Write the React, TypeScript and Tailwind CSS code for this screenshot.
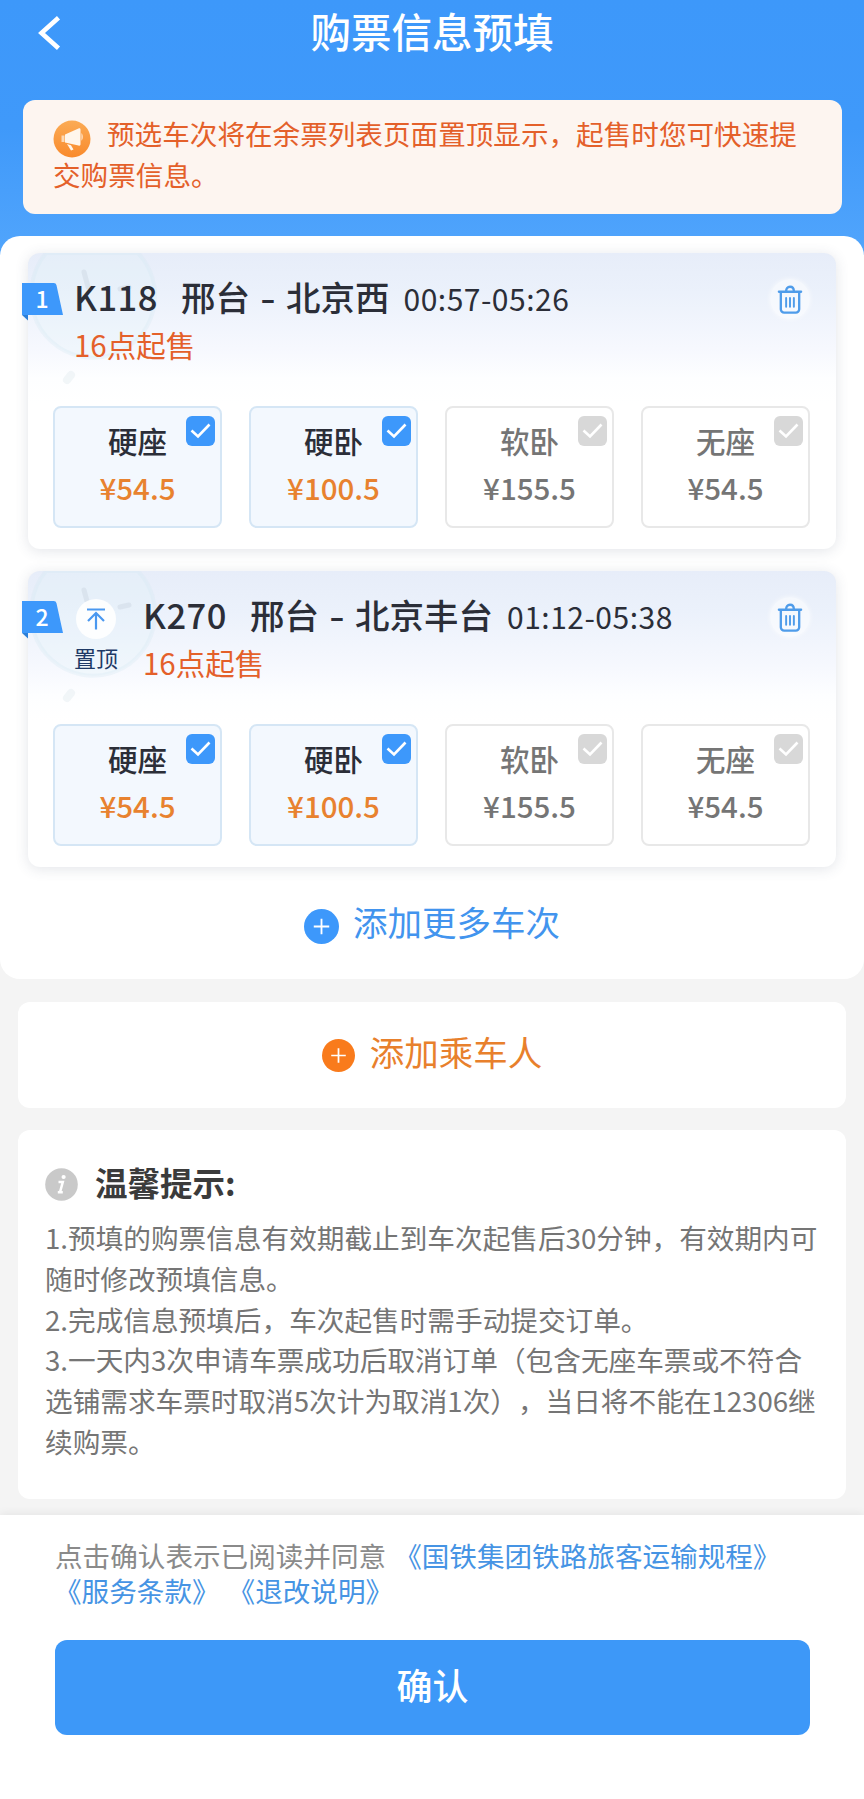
import React, { useState } from 'react';
import clsx from 'clsx';

interface Seat {
  name: string;
  price: string;
  checked: boolean;
}

interface Train {
  code: string;
  from: string;
  to: string;
  time: string;
  pinnable: boolean;
  seats: Seat[];
}

const SEATS: Seat[] = [
  { name: '硬座', price: '54.5', checked: true },
  { name: '硬卧', price: '100.5', checked: true },
  { name: '软卧', price: '155.5', checked: false },
  { name: '无座', price: '54.5', checked: false },
];

const TRAINS: Train[] = [
  { code: 'K118', from: '邢台', to: '北京西', time: '00:57-05:26', pinnable: false, seats: SEATS },
  { code: 'K270', from: '邢台', to: '北京丰台', time: '01:12-05:38', pinnable: true, seats: SEATS },
];

const TIPS = [
  '1.预填的购票信息有效期截止到车次起售后30分钟，有效期内可',
  '随时修改预填信息。',
  '2.完成信息预填后，车次起售时需手动提交订单。',
  '3.一天内3次申请车票成功后取消订单（包含无座车票或不符合',
  '选铺需求车票时取消5次计为取消1次），当日将不能在12306继',
  '续购票。',
];

function HornIcon() {
  return (
    <svg className="h-[38px] w-[38px] shrink-0" viewBox="0 0 38 38">
      <defs>
        <linearGradient id="horn" x1="0" y1="0" x2="0" y2="1">
          <stop offset="0" stopColor="#fbab55" />
          <stop offset="1" stopColor="#f98a2c" />
        </linearGradient>
      </defs>
      <circle cx="19" cy="19" r="18.5" fill="url(#horn)" />
      <path d="M8.500 15.500h3v6.500h-3z" fill="#fdd9b5" />
      <path d="M12 14.500L25.500 8.500c1.200-.5 2 0 2 1.200v14.600c0 1.200-.8 1.700-2 1.200L12 22.500z" fill="#fff6ec" />
      <path d="M14 24l4 1.200 2.500 4.300-2.500 1z" fill="#fff6ec" />
      <path d="M28.300 13c2.200 1.800 2.200 6 0 7.800z" fill="#fdd9b5" />
    </svg>
  );
}

function TrashIcon() {
  return (
    <svg className="h-[29px] w-[26px]" viewBox="0 0 26 30" fill="none" stroke="#4f9cea" strokeLinecap="round" strokeLinejoin="round">
      <path d="M1.500 7h23" strokeWidth="2.400" />
      <path d="M9 6.500c0-2.800 1.500-4.700 4-4.700s4 1.900 4 4.700" strokeWidth="2.400" />
      <path d="M3.500 8v17a3.500 3.500 0 0 0 3.500 3.500h12a3.500 3.500 0 0 0 3.500-3.500V8" strokeWidth="2.400" />
      <path d="M9 13.500v9M13 13.500v9M17 13.500v9" strokeWidth="2" />
    </svg>
  );
}

function PlusCircle({ className }: { className: string }) {
  return (
    <svg className={className} viewBox="0 0 34 34">
      <circle cx="17" cy="17" r="17" fill="currentColor" />
      <path d="M17 9.500v15M9.500 17h15" stroke="#fff" strokeWidth="1.800" />
    </svg>
  );
}

// faint clock behind the top left corner of a card
function ClockMark() {
  return (
    <svg className="absolute left-0 top-0 h-[140px] w-[140px]" viewBox="0 0 140 140" fill="none">
      <path
        d="M18 0h92a62 62 0 1 1-106 32A62 62 0 0 1 18 0z"
        fill="#e2f2f8"
        fillOpacity="0.3"
        stroke="#d3e9f3"
        strokeOpacity="0.3"
        strokeWidth="4"
      />
      <path d="M56 19l4 15M92 36l9-2" stroke="#c9d3de" strokeOpacity="0.4" strokeWidth="5" strokeLinecap="round" />
      <path d="M43 122l-4 5" stroke="#e6edf2" strokeOpacity="0.5" strokeWidth="8" strokeLinecap="round" />
    </svg>
  );
}

function SeatBox({ seat, onToggle }: { seat: Seat; onToggle: () => void }) {
  return (
    <button
      type="button"
      onClick={onToggle}
      className={clsx(
        'relative flex h-[122px] flex-col items-center rounded-lg border-2 pt-[12px] text-[29.500px] font-medium',
        seat.checked ? 'border-[#d5e6f5] bg-[#f3f8fe] text-[#2b2e38]' : 'border-[#e8e8e8] bg-white text-[#757575]',
      )}
    >
      <span className="leading-10">{seat.name}</span>
      <span className={clsx('mt-[7px] leading-10', seat.checked && 'text-[#e8822f]')}>¥{seat.price}</span>
      <span
        className={clsx(
          'absolute right-[5px] top-[8px] flex h-[30px] w-[29px] items-center justify-center rounded-md',
          seat.checked ? 'bg-[#3d98fb]' : 'bg-[#d8d8d8]',
        )}
      >
        <svg className="h-[16px] w-[21px]" viewBox="0 0 21 16" fill="none" stroke="#fff" strokeWidth="2.6">
          <path d="M1.500 7.500l6.500 6L19.500 1.500" />
        </svg>
      </span>
    </button>
  );
}

function TrainCard({ train, index }: { train: Train; index: number }) {
  const [seats, setSeats] = useState(train.seats);

  const toggle = (i: number) => {
    setSeats(seats.map((s, n) => (n === i ? { ...s, checked: !s.checked } : s)));
  };

  return (
    <div className="relative h-[296px] rounded-xl bg-white bg-[linear-gradient(180deg,#e7edf9_0px,#ebf1fb_40px,#f6f8fe_95px,#fdfeff_125px,#ffffff_150px)] pr-[26px] pl-[25px] shadow-[0_2px_14px_rgba(60,70,100,0.14)]">
      <ClockMark />
      <div className="absolute -left-[6px] top-[30px] h-[38px] w-[42px]">
        <svg className="absolute inset-0 h-full w-full" viewBox="0 0 42 38">
          <path d="M0 32h6v5.500z" fill="#2c7fd8" />
          <path d="M0 0h31.500a3 3 0 0 1 3 2.300L41 32H0z" fill="#3d98fb" />
        </svg>
        <span className="relative block w-[40px] text-center text-[23px] leading-[31px] font-medium text-white">{index}</span>
      </div>

      <div className="relative flex h-[153px] pl-[21px] pt-[22px]">
        {train.pinnable && (
          <div className="mr-[25px] flex w-[44px] flex-col items-center pt-[6px]">
            <div className="flex h-[40px] w-[40px] items-center justify-center rounded-full bg-white/90">
              <svg className="h-[22px] w-[20px]" viewBox="0 0 20 22" fill="none" stroke="#4a98f0" strokeWidth="2.200">
                <path d="M1 1.500h18M10 21.500V5.500M2 13l8-8 8 8" />
              </svg>
            </div>
            <span className="mt-[3px] text-[22px] leading-[30px] whitespace-nowrap text-[#1f3a66]">置顶</span>
          </div>
        )}
        <div className="-mt-[4px] flex-1">
          <div className="flex items-center text-[34.5px] leading-[46px] font-medium whitespace-nowrap text-[#2b2e38]">
            <span className="w-[107px] tracking-[0.5px]">{train.code}</span>
            <span>{train.from}</span>
            <span className="w-[36px] scale-x-125 text-center">-</span>
            <span>{train.to}</span>
            <span className="ml-[14px] mt-[4px] text-[30px] font-normal tracking-[0.5px]">{train.time}</span>
          </div>
          <div className="mt-[3px] text-[29.5px] leading-[40px] text-[#e4602a]">16点起售</div>
        </div>
        <button type="button" className="mt-[4px] flex h-[40px] w-[40px] items-center justify-center rounded-full bg-white/50 shadow-[0_0_5px_rgba(255,255,255,0.7)]">
          <TrashIcon />
        </button>
      </div>

      <div className="relative grid grid-cols-4 gap-[27px]">
        {seats.map((seat, i) => (
          <SeatBox key={seat.name} seat={seat} onToggle={() => toggle(i)} />
        ))}
      </div>
    </div>
  );
}

export default function App() {
  return (
    <div className="flex h-[1799px] w-[864px] flex-col overflow-hidden bg-[#f4f4f4] font-['Noto_Sans_CJK_SC',sans-serif] [text-spacing-trim:space-all]">
      <div className="flex h-[256px] shrink-0 flex-col bg-linear-to-b from-[#3d98fa] via-[#3f99fa] to-[#51a5fc] px-[22px]">
        <div className="grid h-[66px] grid-cols-[60px_1fr_60px] items-center">
          <svg className="ml-[15px] h-[34px] w-[24px]" viewBox="0 0 24 34" fill="none" stroke="#fff" strokeWidth="4.600">
            <path d="M21.500 1.800L4.500 17l17 15.200" />
          </svg>
          <h1 className="-mt-[3px] text-center text-[40.5px] leading-none font-medium text-white">购票信息预填</h1>
        </div>
        <div className="mt-[34px] ml-[1px] h-[114px] rounded-xl bg-[#fdf5f0] px-[30px] pt-[13px] text-[27.6px] leading-[41px] whitespace-nowrap text-[#e4602a]">
          <div className="flex">
            <div className="mr-[16px] pt-[7px]">
              <HornIcon />
            </div>
            <span>预选车次将在余票列表页面置顶显示，起售时您可快速提</span>
          </div>
          <div className="-mt-[4px]">交购票信息。</div>
        </div>
      </div>

      <div className="-mt-[20px] h-[743px] shrink-0 rounded-[20px] bg-white px-[28px] pt-[17px]">
        <div className="flex flex-col gap-[22px]">
          {TRAINS.map((train, i) => (
            <TrainCard key={train.code} train={train} index={i + 1} />
          ))}
        </div>
        <button type="button" className="mt-[31px] flex w-full items-center justify-center gap-[14px] text-[34.5px] leading-[46px] text-[#4294ee]">
          <PlusCircle className="mt-[10px] h-[35px] w-[35px] text-[#3d98fb]" />
          添加更多车次
        </button>
      </div>

      <button
        type="button"
        className="mx-[18px] mt-[23px] flex h-[106px] shrink-0 items-center justify-center gap-[15px] rounded-xl bg-white text-[34.5px] leading-none text-[#e8802c]"
      >
        <PlusCircle className="mt-[1px] h-[33px] w-[33px] text-[#f97b1c]" />
        <span className="-mt-[8px]">添加乘车人</span>
      </button>

      <div className="mx-[18px] mt-[22px] h-[369px] shrink-0 rounded-xl bg-white px-[27px] pt-[29px]">
        <div className="flex items-center">
          <svg className="mt-[5px] h-[33px] w-[33px]" viewBox="0 0 33 33">
            <circle cx="16.500" cy="16.500" r="16.300" fill="#c9c9c9" />
            <circle cx="18.600" cy="9" r="2.100" fill="#fff" />
            <path d="M13.500 14h4.300l-2.700 9.800M12.800 24.200h5" fill="none" stroke="#fff" strokeWidth="2.500" />
          </svg>
          <h2 className="ml-[17px] text-[32.500px] leading-[46px] font-bold text-[#3b3b3b]">温馨提示:</h2>
        </div>
        <div className="mt-[12px] text-[27.650px] leading-[40.8px] whitespace-nowrap text-[#757575]">
          {TIPS.map((line) => (
            <p key={line}>{line}</p>
          ))}
        </div>
      </div>

      <div className="mt-[16px] flex-1 bg-white px-[55px] pt-[23px] shadow-[0_-2px_8px_rgba(0,0,0,0.06)]">
        <div className="flex flex-col text-[27.6px] leading-[34.500px] whitespace-nowrap text-[#8a8a8a]">
          <div className="flex gap-[8px]">
            <span>点击确认表示已阅读并同意</span>
            <a className="text-[#4694e4]">《国铁集团铁路旅客运输规程》</a>
          </div>
          <div className="-ml-[1px] flex gap-[8px] text-[#4694e4]">
            <a>《服务条款》</a>
            <a>《退改说明》</a>
          </div>
        </div>
        <button type="button" className="mt-[33px] h-[95px] w-[755px] rounded-xl bg-[#3d98f8] pb-[8px] text-[36px] font-medium text-white">
          确认
        </button>
      </div>
    </div>
  );
}
